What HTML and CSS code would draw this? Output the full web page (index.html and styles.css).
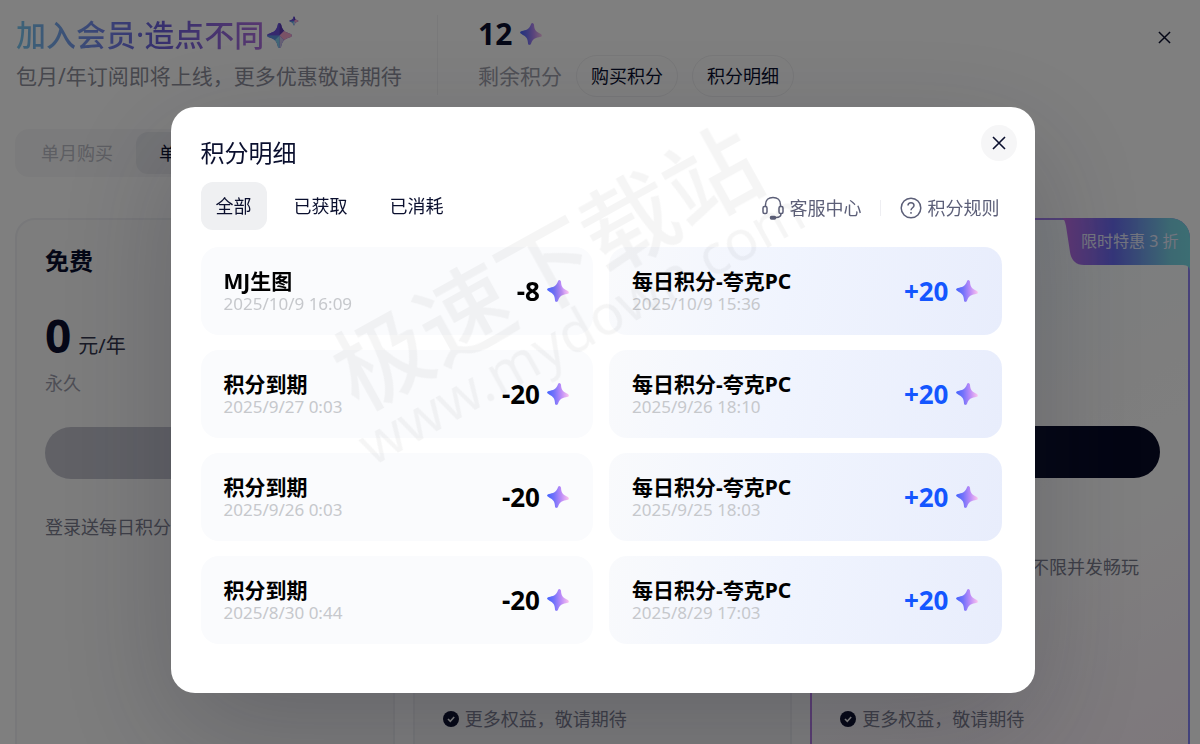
FILE: index.html
```
<!DOCTYPE html>
<html lang="zh-CN">
<head>
  <meta charset="UTF-8">
  <meta name="viewport" content="width=device-width, initial-scale=1.0">
  <title>积分明细</title>
  <link rel="stylesheet" href="styles.css">
</head>
<body>
  <!-- Shared icons -->
  <svg class="sprite" aria-hidden="true">
    <defs>
      <linearGradient id="star-fill" x1="0" y1="0.7" x2="1" y2="0.5">
        <stop offset="0" stop-color="#3f62ff"></stop>
        <stop offset="0.35" stop-color="#7473fa"></stop>
        <stop offset="0.65" stop-color="#b98af8"></stop>
        <stop offset="1" stop-color="#fcc4ee"></stop>
      </linearGradient>
      <linearGradient id="ribbon-fill" x1="0" y1="0" x2="1" y2="0">
        <stop offset="0" stop-color="#c670ea"></stop>
        <stop offset="0.4" stop-color="#6a6cf4"></stop>
        <stop offset="0.85" stop-color="#78d2e4"></stop>
        <stop offset="1" stop-color="#78dce6"></stop>
      </linearGradient>
      <path id="star-shape" d="M12 1c1 0 1.400.8 1.600 1.700.9 4.200 2.500 5.900 6.700 7.300 1.400.5 2.700.9 2.700 2s-1.300 1.500-2.700 2c-4.200 1.400-5.800 3.100-6.700 7.300-.2.900-.6 1.700-1.600 1.700s-1.400-.8-1.600-1.700c-.9-4.200-2.500-5.900-6.700-7.300-1.400-.5-2.700-.9-2.700-2s1.300-1.500 2.700-2c4.200-1.400 5.800-3.100 6.700-7.300.2-.9.6-1.700 1.600-1.700z"></path>
      <clipPath id="star-clip"><use href="#star-shape"></use></clipPath>
      <symbol id="icon-star" viewBox="0 0 24 24">
        <use href="#star-shape" fill="url(#star-fill)" transform="rotate(9 12 12)"></use>
      </symbol>
      <symbol id="icon-facet" viewBox="0 0 24 24">
        <g clip-path="url(#star-clip)">
          <path d="M0 0h24v24H0z" fill="#6a68e8"></path>
          <path d="M12 0v12L0 12V0z" fill="#6a50dc"></path>
          <path d="M12 0l8 4-8 8z" fill="#5c38b4"></path>
          <path d="M12 12l8-8h4v12l-6 2z" fill="#f4a4cc"></path>
          <path d="M12 12l7 7-3 5h-4z" fill="#ccc0e8"></path>
          <path d="M12 12v12H5V17z" fill="#84cfee"></path>
          <path d="M12 12l-7 7-5-7z" fill="#5c94e0"></path>
        </g>
      </symbol>
      <symbol id="icon-close" viewBox="0 0 14 14">
        <path d="M1 1l12 12M13 1L1 13" fill="none" stroke="currentColor" stroke-width="1.6"></path>
      </symbol>
      <symbol id="icon-check" viewBox="0 0 16 16">
        <circle cx="8" cy="8" r="8" fill="#060a26"></circle>
        <path d="M5 8l2.300 2.300L11.200 6" fill="none" stroke="#fff" stroke-width="1.600"></path>
      </symbol>
    </defs>
  </svg>

  <div class="page">
    <header class="header">
      <div class="intro">
        <h1><span class="gradient-text">加入会员·造点不同</span><svg class="sparkle" viewBox="0 0 36 36" aria-hidden="true"><use href="#icon-facet" x="2" y="7" width="27" height="27"></use><use href="#icon-facet" x="25" y="1" width="10" height="10"></use></svg></h1>
        <p>包月/年订阅即将上线，更多优惠敬请期待</p>
      </div>
      <div class="balance">
        <div class="balance-value">12 <svg class="star"><use href="#icon-star"></use></svg></div>
        <div class="balance-actions">
          <span>剩余积分</span>
          <button type="button">购买积分</button>
          <button type="button">积分明细</button>
        </div>
      </div>
      <button type="button" class="page-close" aria-label="关闭页面"><svg><use href="#icon-close"></use></svg></button>
    </header>

    <div class="period">
      <button type="button">单月购买</button>
      <button type="button" class="active">单年购买</button>
    </div>

    <div class="plans">
      <section class="plan">
        <h2>免费</h2>
        <div class="price"><strong>0</strong>元/年</div>
        <p class="term">永久</p>
        <button type="button" class="buy" aria-label="免费" disabled></button>
        <ul>
          <li>登录送每日积分</li>
        </ul>
      </section>
      <section class="plan paid">
        <ul>
          <li><svg><use href="#icon-check"></use></svg>更多权益，敬请期待</li>
        </ul>
      </section>
      <section class="plan paid featured">
        <div class="ribbon">
          <svg viewBox="0 0 128 54" preserveAspectRatio="none" aria-hidden="true"><path d="M0 0h108a20 20 0 0 1 20 20v34c0-4-2-7-7-7H22c-9 0-13-6-14-13L4 8C3 3 2 1 0 0z" fill="url(#ribbon-fill)"></path></svg>
          <span>限时特惠 3 折</span>
        </div>
        <button type="button" class="buy" aria-label="购买"></button>
        <ul>
          <li class="benefit">不限并发畅玩</li>
          <li><svg><use href="#icon-check"></use></svg>更多权益，敬请期待</li>
        </ul>
      </section>
    </div>
  </div>

  <div class="overlay">
    <div class="dialog" role="dialog" aria-labelledby="dialog-title">
      <h2 id="dialog-title">积分明细</h2>
      <button type="button" class="dialog-close" aria-label="关闭"><svg><use href="#icon-close"></use></svg></button>

      <div class="toolbar">
        <div class="tabs">
          <button type="button" class="active">全部</button>
          <button type="button">已获取</button>
          <button type="button">已消耗</button>
        </div>
        <div class="links">
          <a href="#">
            <svg viewBox="0 0 22 24" fill="none" stroke="currentColor" stroke-width="1.500" aria-hidden="true">
              <path d="M3.500 10.500V8.700C3.500 4.200 6.600 1.500 11 1.500s7.500 2.700 7.500 7.200v1.800"></path>
              <rect x="1" y="10.500" width="4" height="7" rx="1.500"></rect>
              <rect x="17" y="10.500" width="4" height="7" rx="1.500"></rect>
              <path d="M19 17.500c0 2.500-2 4-5 4"></path>
              <rect x="8.500" y="20.500" width="5" height="2.500" rx="1" fill="currentColor"></rect>
            </svg>
            客服中心
          </a>
          <a href="#">
            <svg viewBox="0 0 22 24" fill="none" stroke="currentColor" stroke-width="1.500" aria-hidden="true">
              <circle cx="11" cy="12" r="9.800"></circle>
              <path d="M8 9.600C8 7.800 9.300 6.700 11 6.700s3 1.100 3 2.800c0 2.200-3 2.300-3 4.800"></path>
              <path d="M11 16v1.800"></path>
            </svg>
            积分规则
          </a>
        </div>
      </div>

      <div class="records">
        <div class="record">
          <div><h3>MJ生图</h3><time>2025/10/9 16:09</time></div>
          <div class="amount">-8<svg class="star"><use href="#icon-star"></use></svg></div>
        </div>
        <div class="record earned">
          <div><h3>每日积分-夸克PC</h3><time>2025/10/9 15:36</time></div>
          <div class="amount">+20<svg class="star"><use href="#icon-star"></use></svg></div>
        </div>
        <div class="record">
          <div><h3>积分到期</h3><time>2025/9/27 0:03</time></div>
          <div class="amount">-20<svg class="star"><use href="#icon-star"></use></svg></div>
        </div>
        <div class="record earned">
          <div><h3>每日积分-夸克PC</h3><time>2025/9/26 18:10</time></div>
          <div class="amount">+20<svg class="star"><use href="#icon-star"></use></svg></div>
        </div>
        <div class="record">
          <div><h3>积分到期</h3><time>2025/9/26 0:03</time></div>
          <div class="amount">-20<svg class="star"><use href="#icon-star"></use></svg></div>
        </div>
        <div class="record earned">
          <div><h3>每日积分-夸克PC</h3><time>2025/9/25 18:03</time></div>
          <div class="amount">+20<svg class="star"><use href="#icon-star"></use></svg></div>
        </div>
        <div class="record">
          <div><h3>积分到期</h3><time>2025/8/30 0:44</time></div>
          <div class="amount">-20<svg class="star"><use href="#icon-star"></use></svg></div>
        </div>
        <div class="record earned">
          <div><h3>每日积分-夸克PC</h3><time>2025/8/29 17:03</time></div>
          <div class="amount">+20<svg class="star"><use href="#icon-star"></use></svg></div>
        </div>
      </div>

      <!-- Diagonal watermark -->
      <div class="watermark">
        <div class="watermark-name">极速下载站</div>
        <div class="watermark-url">www.mydown.com</div>
      </div>
    </div>
  </div>
</body>
</html>
```

FILE: styles.css
```
* {
  box-sizing: border-box;
}

body {
  margin: 0;
  font-family: "Noto Sans", "Noto Sans CJK SC", sans-serif;
  font-size: 18px;
  line-height: 24px;
  color: #0a0f2e;
  background: #fff;
}

h1, h2, h3, p, ul {
  margin: 0;
  padding: 0;
  font-weight: 400;
}

button {
  padding: 0;
  border: none;
  background: none;
  font: inherit;
  color: inherit;
  white-space: nowrap;
  cursor: pointer;
}

a {
  color: inherit;
  text-decoration: none;
}

svg {
  flex: none;
}

.sprite {
  position: absolute;
  width: 0;
  height: 0;
}

.star {
  width: 24px;
  height: 24px;
}

/* Membership page */
.page {
  height: 100vh;
  overflow: hidden;
  padding: 15px 10px 0 15px;
}

.header {
  display: flex;
  align-items: flex-start;
}

.intro {
  width: 36%;
  height: 80px;
  padding-left: 1px;
  border-right: 1px solid #f2f2f4;
  white-space: nowrap;
}

.intro h1 {
  display: flex;
  font-size: 30px;
  font-weight: 500;
  line-height: 40px;
}

.gradient-text {
  background: linear-gradient(90deg, #7cc8f0, #7482ec 38%, #6c60dc 58%, #b070e0);
  -webkit-background-clip: text;
  background-clip: text;
  color: transparent;
}

.sparkle {
  width: 36px;
  height: 36px;
}

.intro p {
  font-size: 21px;
  line-height: 42px;
  color: #8f909c;
}

.balance {
  flex: 1;
  padding-left: 40px;
}

.balance-value {
  display: flex;
  align-items: center;
  gap: 7px;
  font-size: 30px;
  font-weight: 700;
  line-height: 38px;
}

.balance-actions {
  display: flex;
  align-items: center;
  gap: 14px;
  margin-top: 2px;
}

.balance-actions span {
  font-size: 21px;
  color: #a0a1ab;
}

.balance-actions button {
  height: 42px;
  padding: 0 14px;
  border: 1px solid #f0f0f2;
  border-radius: 21px;
}

.page-close {
  display: flex;
  padding: 16px 19px;
}

.page-close svg {
  width: 13px;
  height: 13px;
}

.period {
  display: inline-flex;
  margin-top: 32px;
  padding: 3px;
  border-radius: 14px;
  background: #f7f7f8;
}

.period button {
  height: 42px;
  padding: 0 23px;
  border-radius: 12px;
  color: #bbbcc6;
}

.period .active {
  background: #e9eaee;
  color: #0a0f2e;
}

.plans {
  display: grid;
  grid-template-columns: repeat(3, 1fr);
  gap: 18px;
  margin-top: 41px;
}

.plan {
  position: relative;
  height: 560px;
  padding: 25px 28px;
  border: 2px solid #f0f1f4;
  border-radius: 20px;
  background: #fafafb;
}

.paid {
  display: flex;
  flex-direction: column;
  justify-content: flex-end;
  padding-bottom: 38px;
}

.featured {
  border-color: transparent;
  background:
    linear-gradient(150deg, #f2faff, #fdfdfd 45%, #fff 60%, #fbeff8) padding-box,
    linear-gradient(100deg, #c27ae6, #8484f8) border-box;
}

.plan h2 {
  font-size: 24px;
  font-weight: 700;
  line-height: 32px;
}

.price {
  display: flex;
  align-items: baseline;
  gap: 7px;
  margin-top: 36px;
  font-size: 20px;
  line-height: 44px;
  color: #33364e;
}

.price strong {
  font-size: 46px;
  color: #0a0f2e;
}

.term {
  margin-top: 3px;
  line-height: 24px;
  color: #9c9dab;
}

.buy {
  flex: none;
  width: 100%;
  height: 52px;
  border-radius: 26px;
  background: #060a26;
}

.buy:disabled {
  margin-top: 32px;
  background: #c2c3cd;
}

.plan ul {
  margin-top: 24px;
  list-style: none;
}

.featured ul {
  display: grid;
  gap: 114px;
  margin-top: 70px;
}

.plan li {
  display: flex;
  align-items: center;
  gap: 6px;
  height: 38px;
  color: #7c7e8f;
  white-space: nowrap;
}

.plan .benefit {
  justify-content: flex-end;
  padding-right: 21px;
}

.plan li svg {
  width: 16px;
  height: 16px;
}

.ribbon {
  position: absolute;
  top: -2px;
  right: -2px;
  width: 128px;
  padding-left: 19px;
  font-size: 16px;
  line-height: 47px;
  color: #e6eaff;
  white-space: nowrap;
}

.ribbon svg {
  position: absolute;
  top: 0;
  left: 0;
  width: 128px;
  height: 54px;
}

.ribbon span {
  position: relative;
}

/* Credits dialog */
.overlay {
  position: fixed;
  inset: 0;
  display: flex;
  align-items: center;
  justify-content: center;
  padding: 56px 0 0 5px;
  background: rgba(0, 0, 0, 0.5);
}

.dialog {
  position: relative;
  width: 72vw;
  padding: 30px 33px 49px 30px;
  border-radius: 24px;
  background: #fff;
  box-shadow: 0 40px 120px rgba(30, 30, 48, 0.24);
}

.dialog h2 {
  font-size: 24px;
  line-height: 32px;
}

.dialog-close {
  position: absolute;
  top: 18px;
  right: 18px;
  display: flex;
  align-items: center;
  justify-content: center;
  width: 36px;
  height: 36px;
  border-radius: 50%;
  background: #f6f6f7;
}

.dialog-close svg {
  width: 14px;
  height: 14px;
}

.toolbar {
  display: flex;
  align-items: center;
  justify-content: space-between;
  margin-top: 13px;
}

.tabs {
  display: flex;
  gap: 12px;
}

.tabs button {
  height: 48px;
  padding: 0 15px;
  border-radius: 12px;
}

.tabs .active {
  background: #eff0f2;
}

.links {
  display: flex;
  padding: 4px 2px 0 0;
  color: #5c5f78;
}

.links a {
  display: flex;
  align-items: center;
  gap: 6px;
}

.links a + a {
  margin-left: 18px;
  padding-left: 20px;
  background: linear-gradient(#eeeef2, #eeeef2) left center / 1px 16px no-repeat;
}

.links svg {
  width: 22px;
  height: 24px;
}

.records {
  display: grid;
  grid-template-columns: 1fr 1fr;
  gap: 15px 16px;
  margin-top: 17px;
}

.record {
  display: flex;
  align-items: center;
  justify-content: space-between;
  height: 88px;
  padding: 0 23px;
  border-radius: 18px;
  background: #fafbfd;
  color: #000;
}

.earned {
  background: linear-gradient(100deg, #f9fafc, #f0f4fe 45%, #e8edfc);
}

.record h3 {
  padding-top: 2px;
  font-size: 21px;
  font-weight: 700;
  line-height: 24px;
}

.record time {
  display: block;
  font-size: 17px;
  line-height: 22px;
  color: #c6c8cc;
}

.amount {
  display: flex;
  align-items: center;
  gap: 6px;
  font-size: 26px;
  font-weight: 700;
}

.earned .amount {
  color: #1456ff;
}

.watermark {
  position: absolute;
  top: 107px;
  left: 138px;
  color: rgba(0, 0, 0, 0.04);
  white-space: nowrap;
  transform: rotate(-29deg);
  pointer-events: none;
}

.watermark-name {
  margin-bottom: -12px;
  padding-left: 14px;
  font-size: 94px;
  font-weight: 500;
  line-height: 100px;
}

.watermark-url {
  font-size: 56px;
  line-height: 60px;
}
```
